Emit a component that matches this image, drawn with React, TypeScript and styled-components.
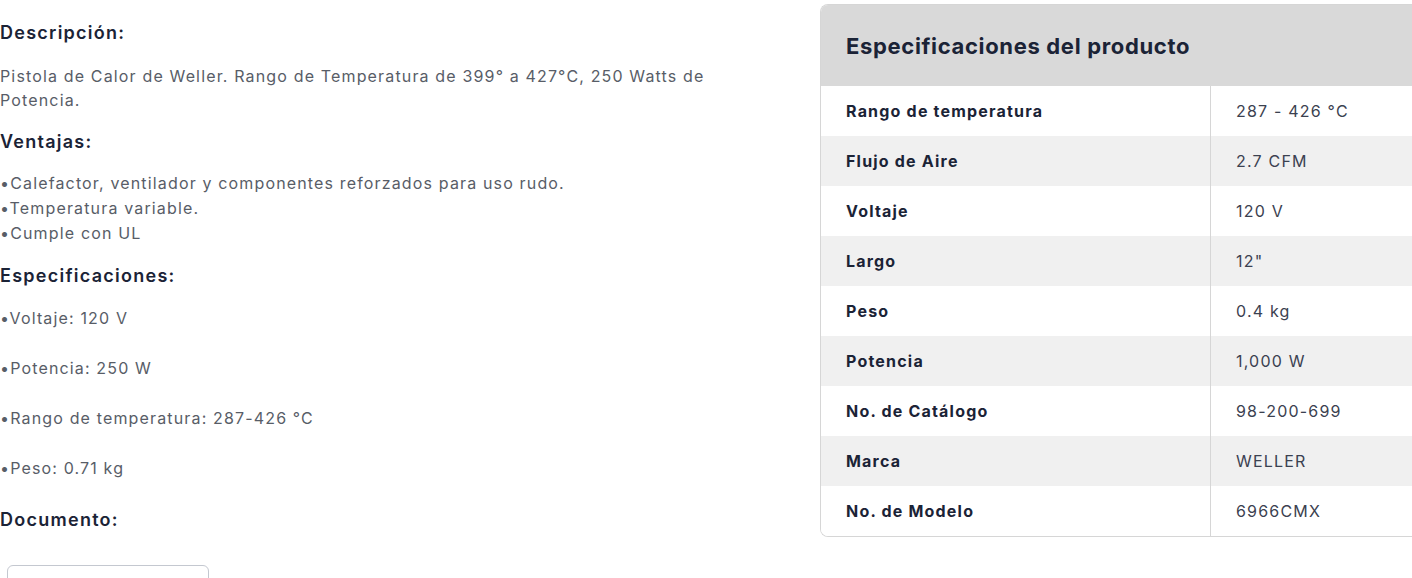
import styled, { createGlobalStyle } from 'styled-components'

const GlobalStyle = createGlobalStyle`
  html, body {
    margin: 0;
    padding: 0;
    background: #ffffff;
    overflow: hidden;
  }
  body {
    font-family: Inter, "Noto Sans", sans-serif;
    color: #1b2336;
  }
`

const Page = styled.div`
  display: flex;
  align-items: flex-start;
  width: 1412px;
  height: 578px;
  overflow: hidden;
`

const Details = styled.div`
  width: 820px;
  flex-shrink: 0;
  padding-top: 20px;
`

const Heading = styled.h3`
  margin: 0;
  font-size: 18px;
  line-height: 26px;
  font-weight: 600;
  letter-spacing: 0.07em;
  color: #1b2336;
`

const Text = styled.p<{ $gap?: number }>`
  margin: ${({ $gap }) => $gap ?? 18}px 0 0;
  max-width: 720px;
  font-size: 16px;
  line-height: 24px;
  letter-spacing: 0.072em;
  color: #585d67;
`

const List = styled.div`
  margin: 16px 0 0;
  font-size: 16px;
  line-height: 25px;
  letter-spacing: 0.072em;
  color: #585d67;
`

const Section = styled.div<{ $top?: number }>`
  margin-top: ${({ $top }) => $top ?? 17}px;
`

const DocButton = styled.div`
  margin: 32px 0 0 7px;
  width: 200px;
  height: 40px;
  border: 1px solid #c4c8d0;
  border-radius: 6px;
`

const Panel = styled.div`
  margin-top: 4px;
  width: 640px;
  flex-shrink: 0;
  border: 1px solid #d6d6d6;
  border-right: none;
  border-radius: 8px 0 0 8px;
  overflow: hidden;
  background: #ffffff;
`

const PanelHeader = styled.div`
  height: 81px;
  display: flex;
  align-items: center;
  padding-left: 25px;
  background: #d9d9d9;
  font-size: 22px;
  font-weight: 700;
  letter-spacing: 0.03em;
  color: #1b2336;
`

const Row = styled.div<{ $shade: boolean }>`
  display: grid;
  grid-template-columns: 390px 1fr;
  height: 50px;
  background: ${({ $shade }) => ($shade ? '#f0f0f0' : '#ffffff')};
`

const Label = styled.div`
  display: flex;
  align-items: center;
  padding-left: 25px;
  border-right: 1px solid #d6d6d6;
  font-size: 16px;
  font-weight: 700;
  letter-spacing: 0.075em;
  color: #1b2336;
`

const Value = styled.div`
  display: flex;
  align-items: center;
  padding-left: 25px;
  font-size: 16px;
  letter-spacing: 0.075em;
  color: #3b4150;
`

const specs: [string, string][] = [
  ['Rango de temperatura', '287 - 426 °C'],
  ['Flujo de Aire', '2.7 CFM'],
  ['Voltaje', '120 V'],
  ['Largo', '12"'],
  ['Peso', '0.4 kg'],
  ['Potencia', '1,000 W'],
  ['No. de Catálogo', '98-200-699'],
  ['Marca', 'WELLER'],
  ['No. de Modelo', '6966CMX'],
]

export default function App() {
  return (
    <>
      <GlobalStyle />
      <Page>
        <Details>
          <Heading>Descripción:</Heading>
          <Text>
            Pistola de Calor de Weller. Rango de Temperatura de 399° a 427°C, 250 Watts de Potencia.
          </Text>
          <Section>
            <Heading>Ventajas:</Heading>
            <List>
              <div>•Calefactor, ventilador y componentes reforzados para uso rudo.</div>
              <div>•Temperatura variable.</div>
              <div>•Cumple con UL</div>
            </List>
          </Section>
          <Section>
            <Heading>Especificaciones:</Heading>
            <Text $gap={17}>•Voltaje: 120 V</Text>
            <Text $gap={26}>•Potencia: 250 W</Text>
            <Text $gap={26}>•Rango de temperatura: 287-426 °C</Text>
            <Text $gap={26}>•Peso: 0.71 kg</Text>
          </Section>
          <Section $top={27}>
            <Heading>Documento:</Heading>
            <DocButton />
          </Section>
        </Details>
        <Panel>
          <PanelHeader>Especificaciones del producto</PanelHeader>
          {specs.map(([label, value], i) => (
            <Row key={label} $shade={i % 2 === 1}>
              <Label>{label}</Label>
              <Value>{value}</Value>
            </Row>
          ))}
        </Panel>
      </Page>
    </>
  )
}
